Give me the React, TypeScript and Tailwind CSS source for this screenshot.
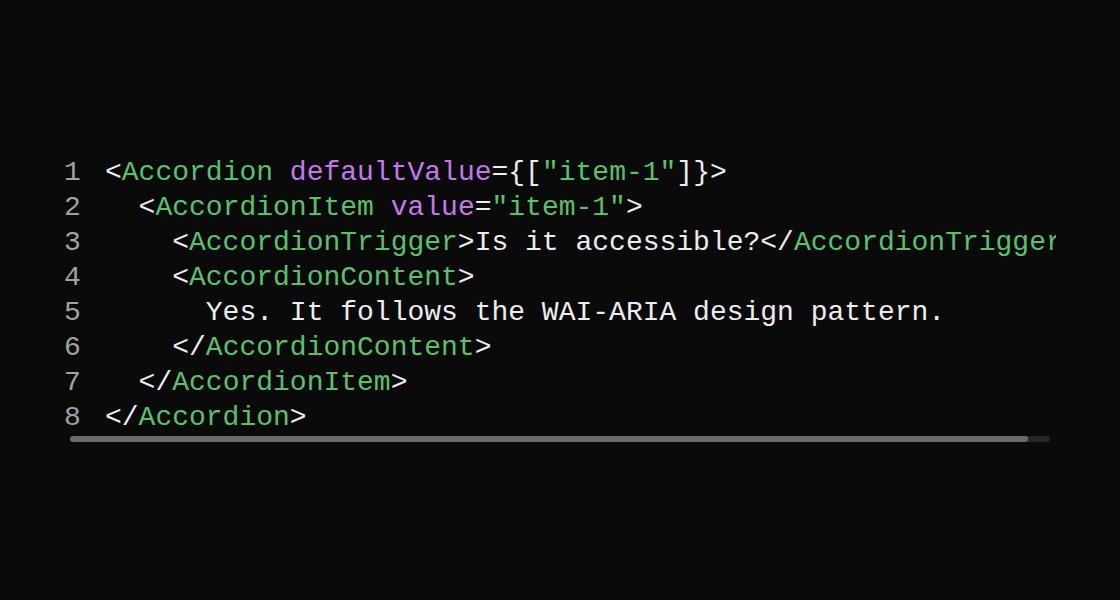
const G = "text-[#5cc06b]";
const P = "text-[#c17ae8]";

type Tok = [string, string?];

const lines: Tok[][] = [
  [["<"], ["Accordion", G], [" "], ["defaultValue", P], ["={["], ['"item-1"', G], ["]}>"]],
  [["  <"], ["AccordionItem", G], [" "], ["value", P], ["="], ['"item-1"', G], [">"]],
  [["    <"], ["AccordionTrigger", G], [">Is it accessible?</"], ["AccordionTrigger", G], [">"]],
  [["    <"], ["AccordionContent", G], [">"]],
  [["      Yes. It follows the WAI-ARIA design pattern."]],
  [["    </"], ["AccordionContent", G], [">"]],
  [["  </"], ["AccordionItem", G], [">"]],
  [["</"], ["Accordion", G], [">"]],
];

export default function App() {
  return (
    <div className="flex h-[600px] w-[1120px] items-center justify-center bg-[#0a0a0a]">
      <div className="w-[992px] pb-[3px]">
        <div className="overflow-hidden font-['Liberation_Mono',monospace] text-[28px] leading-[35px] text-[#ededed]">
          {lines.map((toks, i) => (
            <div key={i} className="flex whitespace-pre">
              <span className="mr-[24px] w-[17px] shrink-0 text-[#a1a1a1]">{i + 1}</span>
              <span>
                {toks.map(([t, c], j) => (
                  <span key={j} className={c}>
                    {t}
                  </span>
                ))}
              </span>
            </div>
          ))}
        </div>
        <div className="mx-[6px] mt-[1px] h-[6px] rounded-full bg-[#262626]">
          <div className="h-full w-[958px] rounded-full bg-[#6b6b6b]" />
        </div>
      </div>
    </div>
  );
}
